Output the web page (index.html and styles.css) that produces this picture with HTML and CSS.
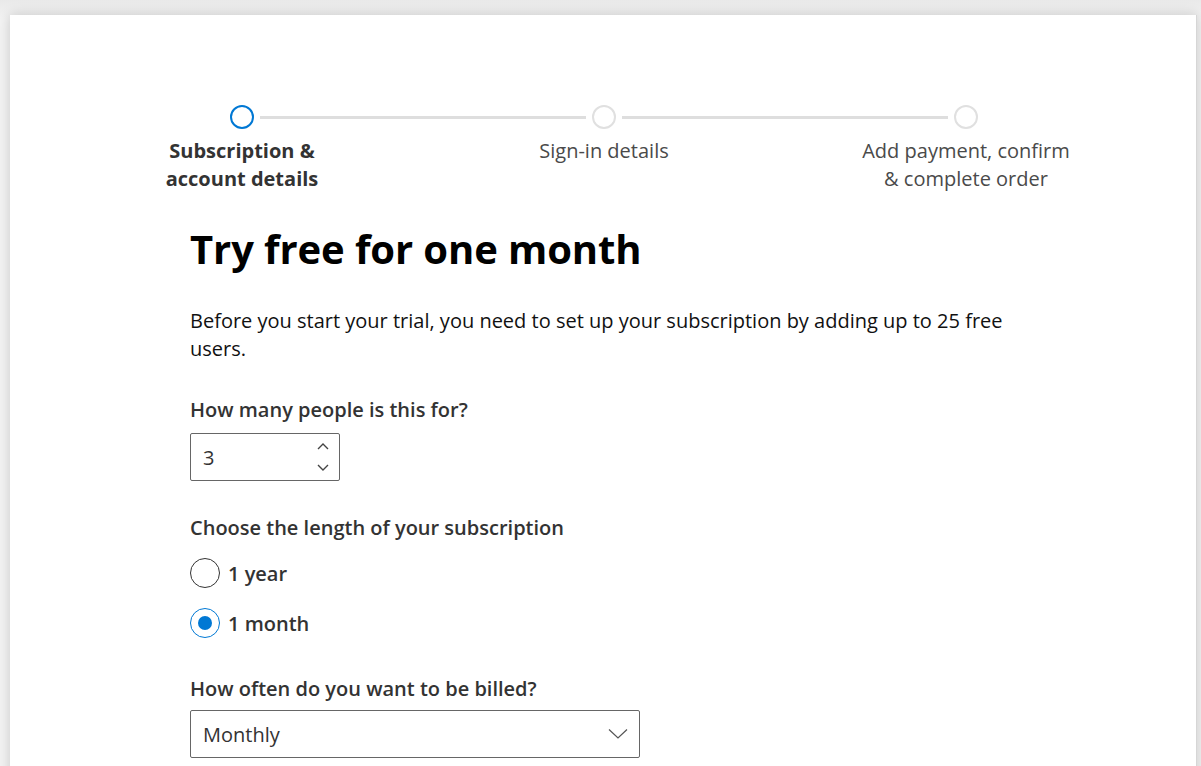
FILE: index.html
```html
<!DOCTYPE html>
<html lang="en">
<head>
<meta charset="utf-8">
<title>Try free for one month</title>
<link rel="stylesheet" href="styles.css">
</head>
<body>
<div class="card">
  <div class="stepper">
    <div class="track">
      <span class="dot active"></span>
      <span class="line"></span>
      <span class="dot"></span>
      <span class="line"></span>
      <span class="dot"></span>
    </div>
    <div class="labels">
      <div class="step-label current">Subscription &amp;<br>account details</div>
      <div class="step-label">Sign-in details</div>
      <div class="step-label">Add payment, confirm<br>&amp; complete order</div>
    </div>
  </div>

  <form class="form">
    <h1 class="title">Try free for one month</h1>
    <p class="intro">Before you start your trial, you need to set up your subscription by adding up to 25 free users.</p>

    <div class="field-label">How many people is this for?</div>
    <div class="number">
      <span class="number-value">3</span>
      <span class="spin">
        <svg width="14" height="9" viewBox="0 0 14 9"><path d="M2 7 L7 2 L12 7" fill="none" stroke="#444" stroke-width="1.4"/></svg>
        <svg width="14" height="9" viewBox="0 0 14 9"><path d="M2 2 L7 7 L12 2" fill="none" stroke="#444" stroke-width="1.4"/></svg>
      </span>
    </div>

    <div class="field-label">Choose the length of your subscription</div>
    <div class="radios">
      <div class="radio"><span class="radio-circle"></span><span class="radio-text">1 year</span></div>
      <div class="radio"><span class="radio-circle checked"></span><span class="radio-text">1 month</span></div>
    </div>

    <div class="field-label billed">How often do you want to be billed?</div>
    <div class="select">
      <span class="select-value">Monthly</span>
      <svg width="20" height="12" viewBox="0 0 20 12"><path d="M1 1.5 L10 10 L19 1.5" fill="none" stroke="#555" stroke-width="1.2"/></svg>
    </div>
  </form>
</div>
</body>
</html>
```

FILE: styles.css
```css
html, body {
  margin: 0;
  height: 100%;
}
body {
  background: linear-gradient(#e9e9e9, #f3f3f3 20px);
  padding: 15px 4px 0 10px;
  box-sizing: border-box;
  overflow: hidden;
  font-family: "Open Sans", "Noto Sans", sans-serif;
  color: #1a1a1a;
}
.card {
  background: #fff;
  min-height: 800px;
  box-shadow: 0 0 12px rgba(0,0,0,0.18);
  padding-top: 90px;
  border-right: 1px solid #d6d6d6;
}
.stepper {
  display: flex;
  flex-direction: column;
  align-items: center;
}
.track {
  display: flex;
  align-items: center;
  width: 748px;
  margin-left: 2px;
}
.dot {
  width: 20px;
  height: 20px;
  border-radius: 50%;
  border: 2px solid #e0e0e0;
  flex: none;
}
.dot.active {
  border-color: #0078d4;
}
.line {
  flex: 1;
  height: 3px;
  background: #dedede;
  margin: 0 6px;
}
.labels {
  display: grid;
  grid-template-columns: repeat(3, 362px);
  margin-top: 8px;
  margin-left: 2px;
}
.step-label {
  text-align: center;
  font-size: 20px;
  line-height: 28px;
  color: #4a4a4a;
}
.step-label.current {
  font-weight: 700;
  color: #333;
}
.form {
  margin-left: 180px;
  width: 860px;
}
.title {
  margin: 30px 0 0;
  font-size: 40px;
  line-height: 52px;
  font-weight: 700;
  color: #000;
  letter-spacing: -0.1px;
}
.intro {
  margin: 32px 0 0;
  font-size: 20px;
  line-height: 28px;
  color: #111;
  width: 830px;
}
.field-label {
  margin-top: 33px;
  font-size: 20px;
  line-height: 28px;
  font-weight: 600;
  color: #333;
}
.number {
  margin-top: 9px;
  width: 150px;
  height: 48px;
  box-sizing: border-box;
  border: 1px solid #666;
  border-radius: 2px;
  display: flex;
  align-items: center;
  justify-content: space-between;
  padding: 0 9px 0 12px;
}
.number-value {
  font-size: 20px;
  color: #333;
}
.spin {
  display: flex;
  flex-direction: column;
  gap: 12px;
  margin-top: -1px;
}
.spin svg { display: block; }
.radios {
  margin-top: 16px;
  display: flex;
  flex-direction: column;
  gap: 20px;
}
.radio {
  display: flex;
  align-items: center;
  height: 30px;
}
.radio-circle {
  width: 28px;
  height: 28px;
  border: 1px solid #333;
  border-radius: 50%;
  box-sizing: content-box;
  display: flex;
  align-items: center;
  justify-content: center;
}
.radio-circle.checked {
  border-color: #0078d4;
}
.radio-circle.checked::after {
  content: "";
  width: 14px;
  height: 14px;
  border-radius: 50%;
  background: #0078d4;
}
.radio-text {
  margin-left: 8px;
  font-size: 20px;
  font-weight: 600;
  color: #333;
}
.field-label.billed {
  margin-top: 37px;
}
.select {
  margin-top: 7px;
  width: 450px;
  height: 48px;
  box-sizing: border-box;
  border: 1px solid #666;
  border-radius: 2px;
  display: flex;
  align-items: center;
  justify-content: space-between;
  padding: 0 11px 0 12px;
}
.select-value {
  font-size: 20px;
  color: #333;
}
```
